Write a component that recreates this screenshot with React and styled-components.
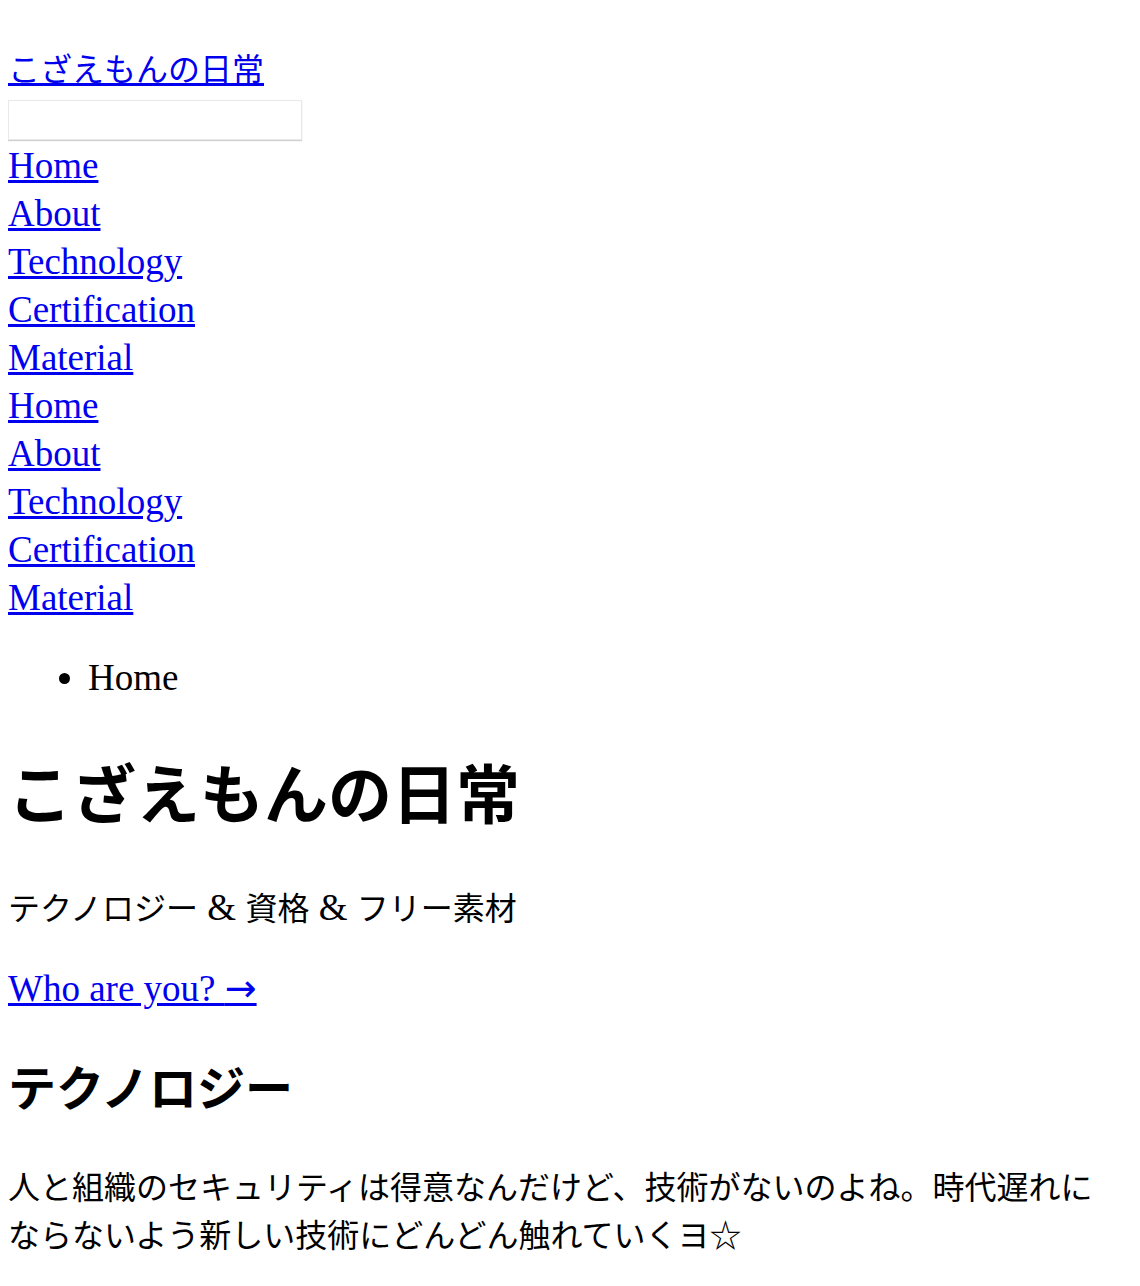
import React from 'react';
import styled, { createGlobalStyle } from 'styled-components';

const GlobalStyle = createGlobalStyle`
html, body {
  margin: 0;
  padding: 0;
  background: #fff;
}
body {
  margin: 8px;
  font-family: "Liberation Serif", "Noto Sans CJK JP", serif;
  font-size: 32px;
  line-height: 48px;
  color: #000;
}
`;

const Header = styled.header`
  padding-top: 38px;
`;

const SiteLink = styled.a`
  color: #0000ee;
  text-decoration: underline;
`;

const TitleRow = styled.div`
  height: 48px;
`;

const Search = styled.input`
  display: block;
  box-sizing: border-box;
  width: 294px;
  height: 40px;
  margin: 6px 0 2px;
  border: 1px solid #e8e8e8;
  box-shadow: 0 1px 1px rgba(0, 0, 0, 0.18);
  background: #fff;
  outline: none;
`;

const Nav = styled.nav`
  display: flex;
  flex-direction: column;
  align-items: flex-start;
`;

const NavLink = styled.a`
  color: #0000ee;
  text-decoration: underline;
  font-size: 37px;
  line-height: 48px;
`;

const Crumbs = styled.ul`
  margin: 32px 0 0;
  padding-left: 80px;
`;

const Crumb = styled.li`
  font-size: 37px;
  line-height: 48px;
`;

const Hero = styled.section`
  margin-top: 47px;
`;

const Title = styled.h1`
  margin: 0;
  font-size: 64px;
  line-height: 96px;
  font-weight: bold;
`;

const Lead = styled.p`
  margin: 40px 0 0;
`;

const Amp = styled.span`
  font-size: 37px;
  line-height: 32px;
`;

const More = styled.p`
  margin: 32px 0 0;
  font-size: 37px;
  line-height: 48px;
`;

const Arrow = styled.span`
  font-family: "DejaVu Sans", sans-serif;
  font-size: 38px;
  line-height: 32px;
`;

const Section = styled.section`
  margin-top: 41px;
`;

const Heading = styled.h2`
  margin: 0;
  font-size: 48px;
  line-height: 72px;
  font-weight: bold;
`;

const Body = styled.p`
  margin: 38px 0 0;
  max-width: 1100px;
`;

const items = ['Home', 'About', 'Technology', 'Certification', 'Material'];

export default function App() {
  return (
    <>
      <GlobalStyle />
      <Header>
        <TitleRow>
          <SiteLink href="#">こざえもんの日常</SiteLink>
        </TitleRow>
        <Search type="text" />
        <Nav>
          {items.map(i => <NavLink key={'a' + i} href="#">{i}</NavLink>)}
          {items.map(i => <NavLink key={'b' + i} href="#">{i}</NavLink>)}
        </Nav>
      </Header>
      <Crumbs>
        <Crumb>Home</Crumb>
      </Crumbs>
      <Hero>
        <Title>こざえもんの日常</Title>
        <Lead>テクノロジー<Amp> &amp; </Amp>資格<Amp> &amp; </Amp>フリー素材</Lead>
        <More><SiteLink href="#">Who are you? <Arrow>→</Arrow></SiteLink></More>
      </Hero>
      <Section>
        <Heading>テクノロジー</Heading>
        <Body>人と組織のセキュリティは得意なんだけど、技術がないのよね。時代遅れにならないよう新しい技術にどんどん触れていくヨ☆</Body>
      </Section>
    </>
  );
}
